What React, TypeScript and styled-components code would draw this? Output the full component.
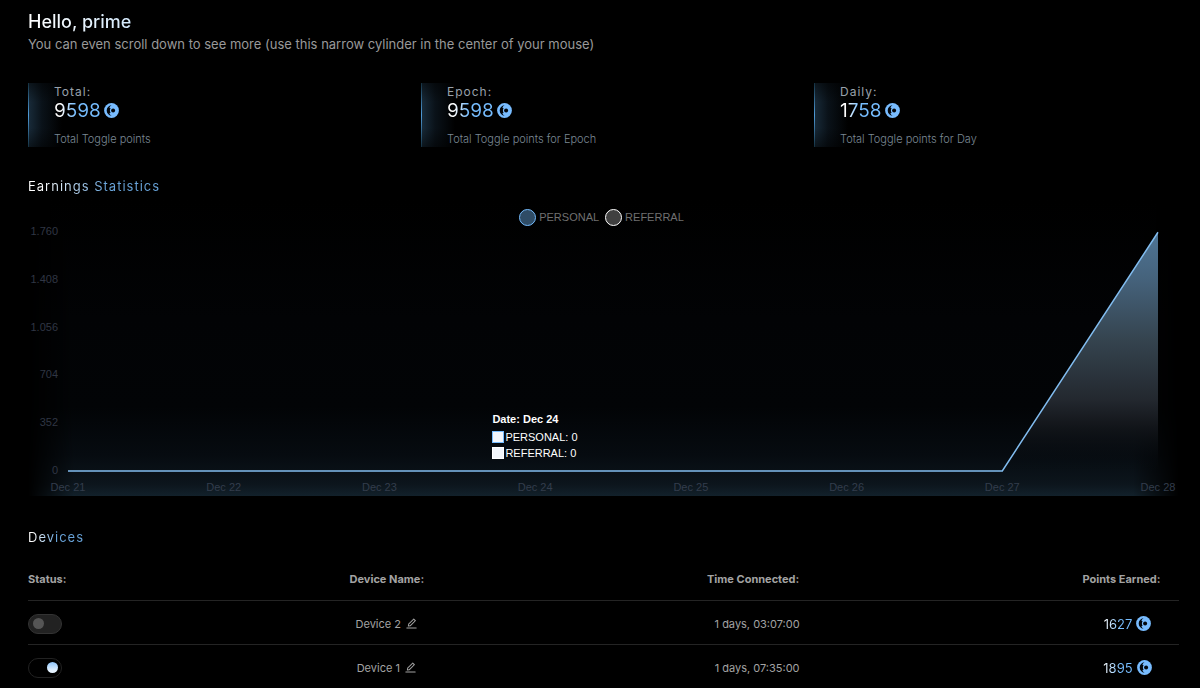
import React, { useState } from "react";
import styled, { createGlobalStyle } from "styled-components";
import { AiOutlineEdit } from "react-icons/ai";

const GlobalStyle = createGlobalStyle`
  * { box-sizing: border-box; }
  body {
    margin: 0;
    background: #000;
    color: #a3a3a3;
    font-family: Inter, "Liberation Sans", sans-serif;
  }
`;

const Page = styled.main`
  padding: 9px 21px 0 28px;
`;

const GradientText = styled.span<{ $from?: string; $to?: string; $start?: number; $end?: number }>`
  background: linear-gradient(
    90deg,
    ${(p) => p.$from ?? "#ffffff"} ${(p) => p.$start ?? 0}%,
    ${(p) => p.$to ?? "#76bdff"} ${(p) => p.$end ?? 100}%
  );
  background-clip: text;
  -webkit-background-clip: text;
  color: transparent;
`;

const Greeting = styled.h1`
  margin: 0;
  font-size: 18px;
  line-height: 26px;
  font-weight: 500;
`;

const Hint = styled.p`
  margin: 0;
  font-size: 13px;
  line-height: 18px;
  color: #999;
`;

const Stats = styled.section`
  display: grid;
  grid-template-columns: repeat(3, 1fr);
  gap: 28px;
  margin-top: 30px;
`;

const StatCard = styled.article`
  height: 64px;
  padding-left: 26px;
  background:
    linear-gradient(180deg, #14303f, #4f9bd8 50%, #14303f) left / 1px 100% no-repeat,
    linear-gradient(180deg, rgba(0, 0, 0, 0.5), transparent 30%, transparent 70%, rgba(0, 0, 0, 0.5)),
    linear-gradient(90deg, #192c3b, #0a1219 14px, transparent 34px) no-repeat;
`;

const StatLabel = styled.h2`
  margin: 0;
  font-size: 12px;
  line-height: 18px;
  font-weight: 400;
  letter-spacing: 1px;
  color: #98a1ab;
`;

const StatValue = styled.div`
  display: flex;
  align-items: center;
  gap: 3px;
  font-size: 19px;
  line-height: 19px;
`;

const StatCaption = styled.p`
  margin: 10px 0 0;
  font-size: 11px;
  line-height: 18px;
  font-weight: 300;
  color: #7a8894;
`;

const SectionTitle = styled.h2<{ $gap: number }>`
  margin: ${(p) => p.$gap}px 0 0;
  font-size: 13px;
  line-height: 20px;
  font-weight: 400;
  letter-spacing: 1px;
`;

const ChartPanel = styled.figure`
  position: relative;
  margin: 4px 0 0;
  padding-top: 8px;
`;

const ChartGlow = styled.div`
  position: absolute;
  inset: 0;
  background: linear-gradient(180deg, #000 0%, #020305 40%, #020406 70%, #060b10 86%, #0c151c 96%, #12212b 100%);
  mask-image: linear-gradient(90deg, transparent, #000 4%, #000 96%, transparent);
`;

const Legend = styled.div`
  position: relative;
  display: flex;
  justify-content: center;
  gap: 6px;
  padding-right: 4px;
`;

const LegendItem = styled.button`
  display: flex;
  align-items: center;
  gap: 3px;
  padding: 0;
  border: 0;
  background: none;
  color: #707070;
  font-family: "Liberation Sans", Arial, sans-serif;
  font-size: 11px;
  line-height: 18px;
  cursor: pointer;
`;

const LegendDot = styled.span<{ $fill: string; $stroke: string }>`
  width: 17px;
  height: 17px;
  border-radius: 50%;
  border: 1px solid ${(p) => p.$stroke};
  background: ${(p) => p.$fill};
`;

const Plot = styled.svg`
  position: relative;
  display: block;
  width: 100%;
  height: auto;
  font-family: "Liberation Sans", Arial, sans-serif;
  font-size: 11px;
`;

const Tooltip = styled.div`
  position: absolute;
  left: 40%;
  bottom: 35px;
  padding: 0 4px;
  color: #fff;
  font-family: "Liberation Sans", Arial, sans-serif;
  font-size: 11px;
  line-height: 16px;
`;

const TooltipTitle = styled.strong`
  display: block;
  margin-bottom: 2px;
`;

const TooltipRow = styled.div`
  display: flex;
  align-items: center;
  gap: 1px;
`;

const Swatch = styled.span<{ $stroke: string }>`
  width: 12px;
  height: 12px;
  border: 1px solid ${(p) => p.$stroke};
  background: #f1f5fa;
`;

const Table = styled.table`
  width: 100%;
  margin-top: 9px;
  table-layout: fixed;
  border-collapse: collapse;
  font-size: 11px;
  line-height: 20px;
`;

const Col = styled.col<{ $width: number }>`
  width: ${(p) => p.$width}%;
`;

const HeadCell = styled.th<{ $align?: string; $indent?: number }>`
  height: 44px;
  padding: 3px 0 0 ${(p) => p.$indent ?? 0}px;
  border-bottom: 1px solid #242424;
  text-align: ${(p) => p.$align ?? "center"};
  white-space: nowrap;
  font-weight: 700;
`;

const Cell = styled.td<{ $align?: string; $indent?: number }>`
  height: 44px;
  padding: 3px 0 0 ${(p) => p.$indent ?? 0}px;
  border-bottom: 1px solid #242424;
  text-align: ${(p) => p.$align ?? "center"};
  white-space: nowrap;
`;

const CellRow = styled.div`
  display: flex;
  align-items: center;
  justify-content: center;
  gap: 4px;
`;

const EditButton = styled.button`
  display: flex;
  padding: 0;
  border: 0;
  background: none;
  color: #a3a3a3;
  cursor: pointer;
`;

const Toggle = styled.input`
  appearance: none;
  display: flex;
  align-items: center;
  width: 34px;
  height: 20px;
  margin: 0;
  padding: 0 4px;
  border: 1px solid #333;
  border-radius: 10px;
  background: #222;
  cursor: pointer;

  &::before {
    content: "";
    width: 11px;
    height: 11px;
    border-radius: 50%;
    background: #555;
  }

  &:checked {
    justify-content: flex-end;
    padding: 0 3px;
    border-color: #222;
    background: #000;
  }

  &:checked::before {
    background: linear-gradient(180deg, #8fc6fb, #e6f3ff 80%);
  }
`;

const Points = styled.span`
  font-size: 13px;
`;

function CoinIcon() {
  return (
    <svg width="15" height="15" viewBox="0 0 15 15" aria-hidden="true">
      <circle cx="7.5" cy="7.5" r="7.4" fill="#78bcff" />
      <path
        d="M7.6 2C4.700 2.500 2.700 4.800 2.700 7.500s2 5 4.900 5.500C6.200 11.900 5.600 11 5.500 9.900H6.600C5.700 8.400 5.700 6.600 6.600 5.100H5.500C5.600 4 6.200 3.100 7.600 2Z"
        fill="#03070c"
      />
      <circle cx="9.1" cy="7.5" r="2" fill="#03070c" />
    </svg>
  );
}

const stats = [
  { label: "Total:", value: "9598", caption: "Total Toggle points" },
  { label: "Epoch:", value: "9598", caption: "Total Toggle points for Epoch" },
  { label: "Daily:", value: "1758", caption: "Total Toggle points for Day" },
];

const earnings = [
  { date: "Dec 21", value: 0 },
  { date: "Dec 22", value: 0 },
  { date: "Dec 23", value: 0 },
  { date: "Dec 24", value: 0 },
  { date: "Dec 25", value: 0 },
  { date: "Dec 26", value: 0 },
  { date: "Dec 27", value: 0 },
  { date: "Dec 28", value: 1758 },
];

const ticks = [
  { label: "1.760", value: 1760 },
  { label: "1.408", value: 1408 },
  { label: "1.056", value: 1056 },
  { label: "704", value: 704 },
  { label: "352", value: 352 },
  { label: "0", value: 0 },
];

const LEFT = 40;
const RIGHT = 1130;
const TOP = 6;
const BASE = 245;

const xAt = (i: number) => LEFT + ((RIGHT - LEFT) * i) / (earnings.length - 1);
const yAt = (v: number) => BASE - ((BASE - TOP) * v) / 1760;

function EarningsPlot() {
  const line = earnings.map((e, i) => `${xAt(i)},${yAt(e.value)}`).join(" ");
  return (
    <Plot viewBox="0 0 1151 270" role="img" aria-label="Points earned per day">
      <defs>
        <linearGradient id="area" gradientUnits="userSpaceOnUse" x1="0" x2="0" y1={TOP} y2={BASE}>
          <stop offset="0" stopColor="#4f7595" />
          <stop offset="0.2" stopColor="#45627b" />
          <stop offset="0.45" stopColor="#35444f" />
          <stop offset="0.7" stopColor="#23282f" />
          <stop offset="0.8" stopColor="#14171c" />
          <stop offset="0.95" stopColor="#080d12" stopOpacity="0.3" />
          <stop offset="1" stopColor="#080d12" stopOpacity="0" />
        </linearGradient>
      </defs>
      <polygon points={`${LEFT},${BASE} ${line} ${RIGHT},${BASE}`} fill="url(#area)" />
      <polyline points={line} fill="none" stroke="#82bdf0" strokeWidth="1.5" />
      <g fill="#303644" textAnchor="end">
        {ticks.map((t) => (
          <text key={t.label} x="30" y={yAt(t.value) + 3}>{t.label}</text>
        ))}
      </g>
      <g fill="#333d4c" textAnchor="middle">
        {earnings.map((e, i) => (
          <text key={e.date} x={xAt(i)} y="265">{e.date}</text>
        ))}
      </g>
    </Plot>
  );
}

const initialDevices = [
  { name: "Device 2", time: "1 days, 03:07:00", points: "1627", active: false },
  { name: "Device 1", time: "1 days, 07:35:00", points: "1895", active: true },
];

export default function App() {
  const [devices, setDevices] = useState(initialDevices);

  const toggle = (name: string) =>
    setDevices((list) => list.map((d) => (d.name === name ? { ...d, active: !d.active } : d)));

  return (
    <Page>
      <GlobalStyle />
      <Greeting>
        <GradientText $to="#d3e9fc">Hello, prime</GradientText>
      </Greeting>
      <Hint>You can even scroll down to see more (use this narrow cylinder in the center of your mouse)</Hint>

      <Stats>
        {stats.map((s) => (
          <StatCard key={s.label}>
            <StatLabel>{s.label}</StatLabel>
            <StatValue>
              <GradientText $start={15} $end={45}>{s.value}</GradientText>
              <CoinIcon />
            </StatValue>
            <StatCaption>{s.caption}</StatCaption>
          </StatCard>
        ))}
      </Stats>

      <SectionTitle $gap={29}>
        <GradientText $start={10} $end={60} $to="#69a5dc">Earnings Statistics</GradientText>
      </SectionTitle>
      <ChartPanel>
        <ChartGlow />
        <Legend>
          <LegendItem type="button">
            <LegendDot $fill="#2f4c66" $stroke="#76bdff" />
            PERSONAL
          </LegendItem>
          <LegendItem type="button">
            <LegendDot $fill="#404040" $stroke="#fff" />
            REFERRAL
          </LegendItem>
        </Legend>
        <EarningsPlot />
        <Tooltip role="status">
          <TooltipTitle>Date: Dec 24</TooltipTitle>
          <TooltipRow><Swatch $stroke="#76bdff" />PERSONAL: 0</TooltipRow>
          <TooltipRow><Swatch $stroke="#fff" />REFERRAL: 0</TooltipRow>
        </Tooltip>
      </ChartPanel>

      <SectionTitle $gap={31}>
        <GradientText $start={10} $end={50} $to="#69a5dc">Devices</GradientText>
      </SectionTitle>
      <Table>
        <colgroup>
          <Col $width={26} />
          <Col $width={10} />
          <Col $width={54} />
          <Col $width={10} />
        </colgroup>
        <thead>
          <tr>
            <HeadCell $align="left">Status:</HeadCell>
            <HeadCell $indent={4}>Device Name:</HeadCell>
            <HeadCell>Time Connected:</HeadCell>
            <HeadCell>Points Earned:</HeadCell>
          </tr>
        </thead>
        <tbody>
          {devices.map((d) => (
            <tr key={d.name}>
              <Cell $align="left">
                <Toggle
                  type="checkbox"
                  aria-label={`${d.name} status`}
                  checked={d.active}
                  onChange={() => toggle(d.name)}
                />
              </Cell>
              <Cell $indent={4}>
                <CellRow>
                  {d.name}
                  <EditButton type="button" aria-label={`Rename ${d.name}`}>
                    <AiOutlineEdit size={13} />
                  </EditButton>
                </CellRow>
              </Cell>
              <Cell $indent={8}>{d.time}</Cell>
              <Cell $indent={12}>
                <CellRow>
                  <Points>
                    <GradientText $end={60}>{d.points}</GradientText>
                  </Points>
                  <CoinIcon />
                </CellRow>
              </Cell>
            </tr>
          ))}
        </tbody>
      </Table>
    </Page>
  );
}
